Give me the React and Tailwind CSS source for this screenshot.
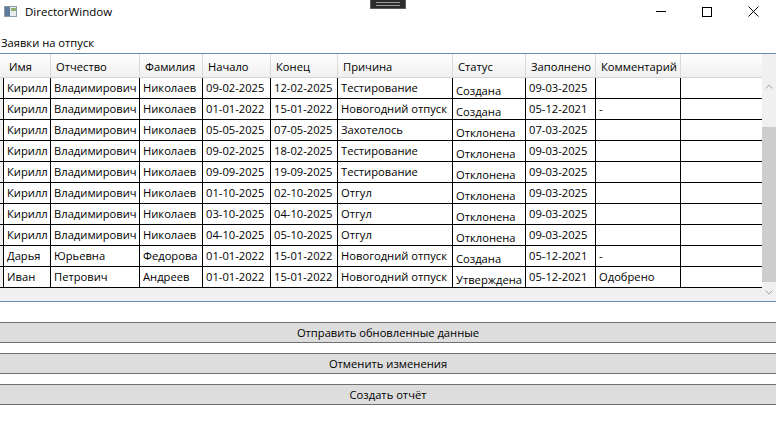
import React from "react";

const columns = [
  { title: "Имя", w: "w-[47px]" },
  { title: "Отчество", w: "w-[89px]" },
  { title: "Фамилия", w: "w-[63px]" },
  { title: "Начало", w: "w-[68px]" },
  { title: "Конец", w: "w-[67px]" },
  { title: "Причина", w: "w-[115px]" },
  { title: "Статус", w: "w-[73px]", low: true },
  { title: "Заполнено", w: "w-[70px]" },
  { title: "Комментарий", w: "w-[85px]" },
];

const kirill = ["Кирилл", "Владимирович", "Николаев"];

const rows = [
  [...kirill, "09-02-2025", "12-02-2025", "Тестирование", "Создана", "09-03-2025", ""],
  [...kirill, "01-01-2022", "15-01-2022", "Новогодний отпуск", "Создана", "05-12-2021", "-"],
  [...kirill, "05-05-2025", "07-05-2025", "Захотелось", "Отклонена", "07-03-2025", ""],
  [...kirill, "09-02-2025", "18-02-2025", "Тестирование", "Отклонена", "09-03-2025", ""],
  [...kirill, "09-09-2025", "19-09-2025", "Тестирование", "Отклонена", "09-03-2025", ""],
  [...kirill, "01-10-2025", "02-10-2025", "Отгул", "Отклонена", "09-03-2025", ""],
  [...kirill, "03-10-2025", "04-10-2025", "Отгул", "Отклонена", "09-03-2025", ""],
  [...kirill, "04-10-2025", "05-10-2025", "Отгул", "Отклонена", "09-03-2025", ""],
  ["Дарья", "Юрьевна", "Федорова", "01-01-2022", "15-01-2022", "Новогодний отпуск", "Создана", "05-12-2021", "-"],
  ["Иван", "Петрович", "Андреев", "01-01-2022", "15-01-2022", "Новогодний отпуск", "Утверждена", "05-12-2021", "Одобрено"],
];

const buttons = ["Отправить обновленные данные", "Отменить изменения", "Создать отчёт"];

const AppIcon = () => (
  <svg width="13" height="11" viewBox="0 0 13 11">
    <rect x="0.5" y="0.5" width="12" height="10" fill="#e8ecef" stroke="#8a9aa6" />
    <rect x="1" y="1" width="5" height="9" fill="#5b7d99" />
    <rect x="7" y="2" width="5" height="3" fill="#8fb06a" />
  </svg>
);

const Chevron = ({ up }) => (
  <svg width="8" height="5" viewBox="0 0 8 5">
    <polyline points={up ? "0.5,4.5 4,1 7.5,4.5" : "0.5,0.5 4,4 7.5,0.5"} fill="none" stroke="#a6a6a6" strokeWidth="1" />
  </svg>
);

const App = () => {
  return (
    <div className="relative w-[776px] h-[438px] overflow-hidden bg-white text-black text-[11.2px] leading-none font-['Open_Sans',sans-serif]">
      {/* debug toolbar */}
      <div className="absolute left-[370px] top-0 w-[36px] h-[9px] bg-[#2d2d30] border border-t-0 border-[#5a5a5a] flex flex-col items-center justify-center gap-[2px]">
        <div className="w-[24px] h-px bg-[#9a9a9a]" />
        <div className="w-[24px] h-px bg-[#9a9a9a]" />
      </div>

      {/* title bar */}
      <div className="h-[30px]">
        <div className="h-[23px] flex items-center">
          <div className="pl-[4px] w-[25px]"><AppIcon /></div>
          <span className="text-[11.5px]">DirectorWindow</span>
          <div className="ml-auto flex items-center h-full">
            <div className="w-[46px] flex justify-center"><div className="w-[10px] h-px bg-black" /></div>
            <div className="w-[46px] flex justify-center"><div className="w-[10px] h-[10px] border border-black" /></div>
            <div className="w-[46px] flex justify-center">
              <svg width="11" height="11" viewBox="0 0 11 11">
                <path d="M0.5 0.5 L10.5 10.5 M10.5 0.5 L0.5 10.5" stroke="#000" strokeWidth="1" />
              </svg>
            </div>
          </div>
        </div>
      </div>

      <div className="h-[23px] flex items-center px-[1px] pt-[2px]">Заявки на отпуск</div>

      {/* data grid */}
      <div className="flex border-t border-b border-[#688caf] bg-[#f0f0f0]">
        <div className="flex-1 flex flex-col">
          <div className="flex h-[24px] border-b border-[#d5d5d5] bg-linear-to-b from-white to-[#efefef]">
            <div className="w-[4px]" />
            {columns.map(c => (
              <div key={c.title} className={`${c.w} border-r border-[#dadada] pl-[5px] pt-[3px] flex items-center whitespace-nowrap`}>
                {c.title}
              </div>
            ))}
            <div className="flex-1" />
          </div>
          {rows.map((r, i) => (
            <div key={i} className="flex h-[21px] border-b border-black bg-white">
              <div className="w-[4px] border-r border-black bg-[#f0f0f0]" />
              {r.map((cell, j) => (
                <div key={j} className={`${columns[j].w} border-r border-black pl-[3px] flex items-center whitespace-nowrap overflow-hidden ${columns[j].low ? "pt-[5px]" : ""}`}>
                  {cell}
                </div>
              ))}
              <div className="flex-1" />
            </div>
          ))}
          <div className="h-[13px]" />
        </div>
        <div className="w-[14px] flex flex-col">
          <div className="h-[24px]" />
          <div className="h-[17px] flex items-center justify-center"><Chevron up /></div>
          <div className="flex-1 flex flex-col">
            <div className="h-[32px]" />
            <div className="flex-1 bg-[#cdcdcd]" />
            <div className="h-[2px]" />
          </div>
          <div className="h-[17px] flex items-center justify-center"><Chevron /></div>
        </div>
      </div>

      {/* buttons */}
      <div className="mt-[20px] flex flex-col gap-[10px]">
        {buttons.map(b => (
          <div key={b} className="h-[21px] bg-[#dddddd] border-t border-b border-[#707070] flex items-center justify-center">
            {b}
          </div>
        ))}
      </div>
    </div>
  );
};

export default App;
